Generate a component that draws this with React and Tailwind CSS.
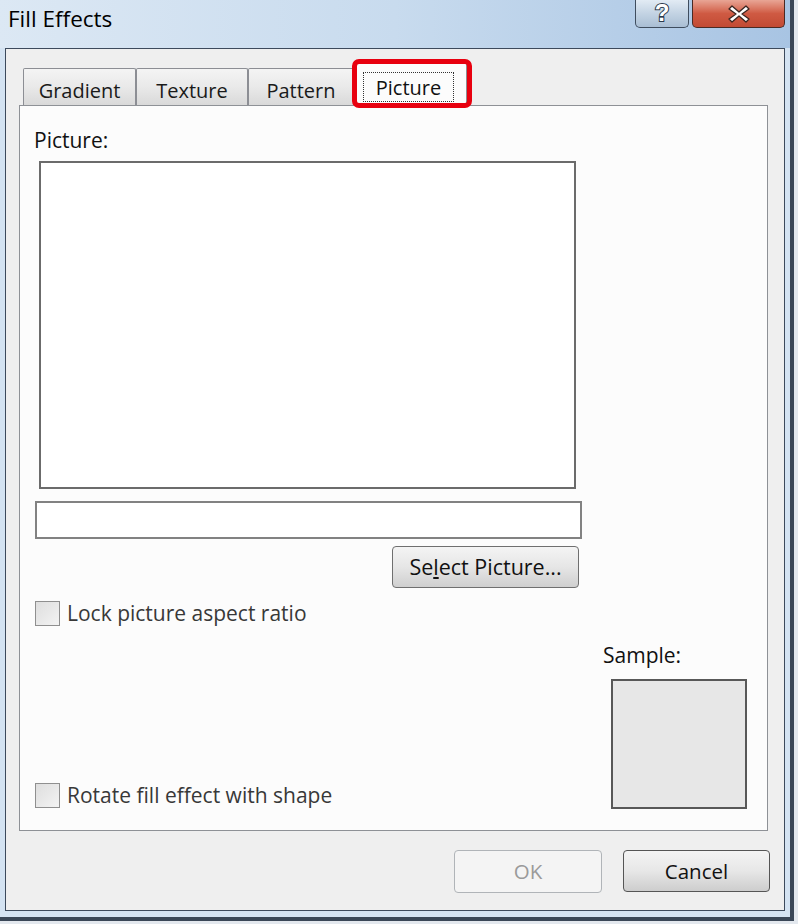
import React from "react";

function Tab({ label, w }) {
  return (
    <div
      className={`h-[37px] ${w} border border-b-0 border-[#8c8e94] rounded-t-[2px] bg-gradient-to-b from-[#f4f4f4] via-[#e9e9e9] to-[#d9d9d9] flex items-center justify-center pt-[7px] text-[20px] text-[#1a1a1a]`}
    >
      {label}
    </div>
  );
}

function Checkbox({ label }) {
  return (
    <div className="flex items-center">
      <div className="w-[25px] h-[25px] border border-[#8f8f8f] bg-gradient-to-br from-[#dedede] to-[#f3f3f3]" />
      <span className="ml-[7px] text-[21px] text-[#383838] leading-[25px] pt-[1px]">{label}</span>
    </div>
  );
}

export default function App() {
  return (
    <div className="w-[798px] h-[924px] overflow-hidden bg-[#e3e8ee] font-['Open_Sans',sans-serif]">
      <div className="w-[794px] h-[921px] border-r-[4px] border-b-[4px] border-[#3a4757] bg-[#d4e3f2] flex flex-col">
        {/* Title bar */}
        <div className="h-[48px] shrink-0 flex items-start bg-gradient-to-r from-[#dce8f4] via-[#c8dbee] to-[#a8c4e3]">
          <div className="pl-[8px] pt-[4px] text-[22.5px] leading-[30px] text-black">Fill Effects</div>
          <div className="ml-auto mr-[5px] flex gap-[3px]">
            <div className="w-[54px] h-[28px] rounded-b-[5px] border border-t-0 border-[#3f4d5e] bg-gradient-to-b from-[#e2ebf4] via-[#c3d3e3] to-[#a9bed4] flex items-center justify-center">
              <svg width="22" height="28" viewBox="0 0 22 28">
                <text
                  x="11"
                  y="21"
                  textAnchor="middle"
                  fontFamily="Liberation Sans, sans-serif"
                  fontWeight="bold"
                  fontSize="24"
                  fill="#ffffff"
                  stroke="#2b3a4c"
                  strokeWidth="2"
                  paintOrder="stroke"
                >
                  ?
                </text>
              </svg>
            </div>
            <div className="w-[93px] h-[28px] rounded-b-[5px] border border-t-0 border-[#4a2a24] bg-gradient-to-b from-[#e8a595] via-[#cf5a43] to-[#c24a33] flex items-center justify-center">
              <svg width="26" height="22" viewBox="0 0 26 22">
                <path
                  d="M6 3 L13 9 L20 3 L23 6 L16 11 L23 16 L20 19 L13 13 L6 19 L3 16 L10 11 L3 6 Z"
                  fill="#ffffff"
                  stroke="#3a2520"
                  strokeWidth="1.3"
                  strokeLinejoin="round"
                />
              </svg>
            </div>
          </div>
        </div>

        {/* Body */}
        <div className="flex-1 flex pl-[5px] pr-[5px] pb-[6px]">
          <div className="flex-1 border border-[#3d4a5c] bg-[#efefef] flex flex-col">
            {/* Tabs */}
            <div className="ml-[13px] pt-[13px] pl-[4px] h-[56px] flex items-end">
              <Tab label="Gradient" w="w-[113px]" />
              <Tab label="Texture" w="w-[112px]" />
              <Tab label="Pattern" w="w-[106px]" />
              <div className="relative z-10 w-[113px] h-[44px] -mb-[1px] border border-b-0 border-[#8c8e94] rounded-t-[2px] bg-[#fcfcfc] flex items-start">
                <div className="ml-[8px] mt-[9px] w-[91px] h-[30px] border border-dotted border-[#333] flex items-center justify-center pt-[2px] text-[20px] text-[#111]">
                  Picture
                </div>
                <div className="absolute -left-[3px] -right-[6px] -top-[4px] -bottom-[2px] border-[5px] border-[#e8000f] rounded-[7px]" />
              </div>
            </div>

            {/* Panel */}
            <div className="ml-[13px] w-[749px] h-[726px] border border-[#8e9196] bg-[#fcfcfc] flex flex-col">
              <div className="ml-[14px] mt-[21px] text-[21px] leading-[27px] text-[#111]">Picture:</div>
              <div className="ml-[19px] mt-[7px] w-[537px] h-[328px] border-2 border-[#6b6b6b] bg-white" />
              <div className="ml-[15px] mt-[12px] w-[547px] h-[38px] border-2 border-[#828282] bg-white" />
              <div className="ml-[372px] mt-[7px] w-[187px] h-[42px] rounded-[4px] border border-[#6f6f6f] bg-gradient-to-b from-[#f4f4f4] via-[#e6e6e6] to-[#cfcfcf] flex items-center justify-center text-[21.5px] text-[#111]">
                <span>
                  Se<span className="underline underline-offset-2">l</span>ect Picture...
                </span>
              </div>
              <div className="ml-[15px] mt-[12px]">
                <Checkbox label="Lock picture aspect ratio" />
              </div>
              <div className="mt-[16px] flex items-end">
                <div className="ml-[15px] mb-[1px]">
                  <Checkbox label="Rotate fill effect with shape" />
                </div>
                <div className="ml-auto mr-[20px] flex flex-col">
                  <div className="text-[21px] leading-[27px] text-[#111]">Sample:</div>
                  <div className="ml-[8px] mt-[10px] w-[136px] h-[130px] border-2 border-[#585858] bg-[#e7e7e7]" />
                </div>
              </div>
            </div>

            {/* Buttons */}
            <div className="mt-[19px] flex justify-end gap-[21px] pr-[14px]">
              <div className="w-[148px] h-[43px] rounded-[4px] border border-[#b0b4b8] bg-[#f4f4f4] flex items-center justify-center text-[20.5px] text-[#9a9a9a]">
                OK
              </div>
              <div className="w-[147px] h-[42px] rounded-[4px] border border-[#555] bg-gradient-to-b from-[#f4f4f4] via-[#e7e7e7] to-[#cdcdcd] flex items-center justify-center text-[20.5px] text-[#111]">
                Cancel
              </div>
            </div>
          </div>
        </div>
      </div>
    </div>
  );
}
